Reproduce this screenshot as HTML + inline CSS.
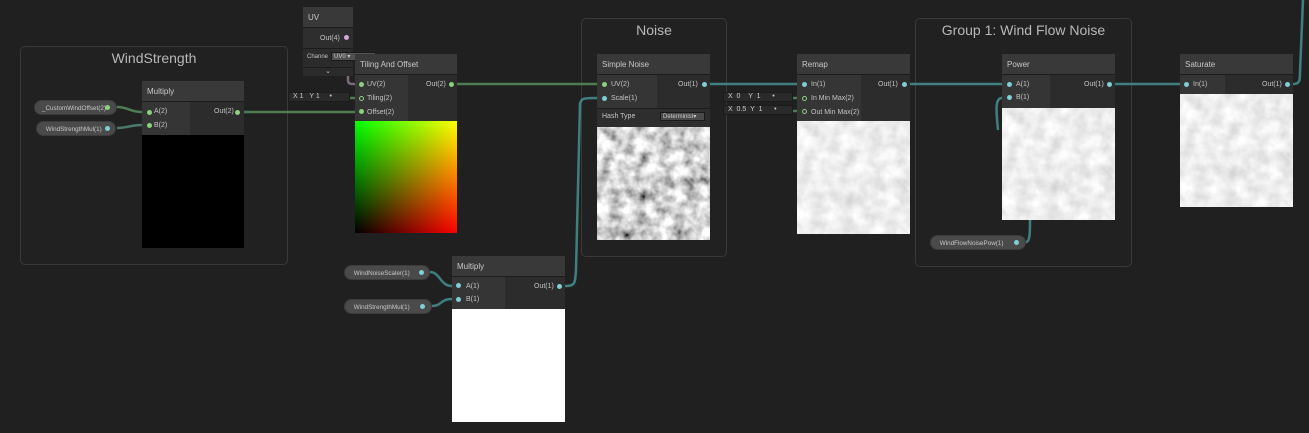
<!DOCTYPE html>
<html><head><style>
*{margin:0;padding:0;box-sizing:border-box}
body{width:1309px;height:433px;background:#202020;position:relative;overflow:hidden;font-family:"Liberation Sans",sans-serif;color:#c4c4c4}
.a{position:absolute}
.grp{position:absolute;border:1px solid #3a3a3a;border-radius:5px;background:#212121}
.gt{position:absolute;left:0;right:0;top:8px;text-align:center;font-size:14px;color:#b8b8b8}
.hd{position:absolute;background:#393939;font-size:8px;color:#c8c8c8;padding:6px 0 0 5px;border-bottom:1px solid #1c1c1c}
.in{position:absolute;background:#353535}
.out{position:absolute;background:#2c2c2c}
.t{position:absolute;font-size:7px;color:#c4c4c4;white-space:nowrap}
.dot{position:absolute;width:5px;height:5px;border-radius:50%}
.g{background:#8bd27d}.b{background:#7ecfd6}.pk{background:#d7a6d8}
.pill{position:absolute;background:#4a4a4a;border-radius:8px;font-size:6.3px;color:#c8c8c8;padding:4px 0 0 7px;border:1px solid #3c3c3c;white-space:nowrap;overflow:hidden}
.fld{position:absolute;background:#2a2a2a;font-size:7px;color:#ccc;border:1px solid #1b1b1b;white-space:nowrap}
</style></head><body>
<svg width="0" height="0" style="position:absolute">
<filter id="n1" x="0" y="0" width="100%" height="100%"><feTurbulence type="fractalNoise" baseFrequency="0.08" numOctaves="3" seed="3"/><feColorMatrix type="matrix" values="1.6 0 0 0 -0.15  1.6 0 0 0 -0.15  1.6 0 0 0 -0.15  0 0 0 0 1"/></filter>
<filter id="n2" x="0" y="0" width="100%" height="100%"><feTurbulence type="fractalNoise" baseFrequency="0.07" numOctaves="3" seed="3"/><feColorMatrix type="matrix" values="0.5 0 0 0 0.6  0.5 0 0 0 0.6  0.5 0 0 0 0.6  0 0 0 0 1"/></filter>
</svg>

<div class="grp" style="left:20px;top:46px;width:268px;height:219px"><div class="gt" style="top:3px">WindStrength</div></div>
<div class="grp" style="left:581px;top:18px;width:146px;height:239px"><div class="gt" style="top:3px">Noise</div></div>
<div class="grp" style="left:915px;top:18px;width:217px;height:249px"><div class="gt" style="top:3px">Group 1: Wind Flow Noise</div></div>

<svg class="a" style="left:0;top:0" width="1309" height="433">
<g fill="none" stroke-width="2.5">
<path d="M243 112 L355 112" stroke="#4f7c52"/>
<path d="M117 107 C128 107,130 112,142 112" stroke="#4f7c52"/>
<path d="M117 128 C128 128,130 125,142 125" stroke="#4a7a6e"/>
<path d="M342 38 C350 38,348 40,348 45 L348 80 C348 84,350 84,355 84" stroke="#7a6a7a"/>
<path d="M456 84 L597 84" stroke="#4f7c52"/>
<path d="M350 98 L355 98" stroke="#4f7c52"/>
<path d="M710 84 L797 84" stroke="#3f7f80"/>
<path d="M789 98 L797 98 M789 111 L797 111" stroke="#4f7c52"/>
<path d="M910 84 L1002 84 M1115 84 L1180 84" stroke="#3f7f80"/>
<path d="M1293 84 C1300 84,1300 80,1300 72 L1303 0" stroke="#3f7f80"/>
<path d="M565 286 C575 286,575 284,576 270 L580 104 C581 98,584 98,597 98" stroke="#3f7f80"/>
<path d="M430 272 C440 272,440 286,452 286" stroke="#3f7f80"/>
<path d="M432 306 C442 306,440 299,452 299" stroke="#3f7f80"/>
<path d="M1026 242 C1030 242,1030 232,1030 220 M1002 98 C995 98,996 110,998 130" stroke="#3f7f80"/>
</g></svg>

<div class="hd" style="left:303px;top:7px;width:50px;height:21px">UV</div>
<div class="out" style="left:303px;top:28px;width:50px;height:20px;background:#2e2e2e"></div>
<div class="t" style="left:320px;top:35px">Out(4)</div><div class="dot pk" style="left:344px;top:35px"></div>
<div class="in" style="left:303px;top:48px;width:50px;height:19px;background:#2b2b2b;border-top:1px solid #1c1c1c"></div>
<div class="t" style="left:307px;top:54px;font-size:6px">Channe</div>
<div class="fld" style="left:331px;top:52px;width:45px;height:9px;background:#515151;font-size:6px;padding-left:2px">UV0 ▾</div>
<div class="a" style="left:303px;top:67px;width:50px;height:9px;background:#2b2b2b;border-top:1px solid #1c1c1c;font-size:7px;text-align:center;line-height:8px">⌄</div>

<div class="hd" style="left:142px;top:81px;width:102px;height:21px">Multiply</div>
<div class="in" style="left:142px;top:102px;width:48px;height:33px"></div>
<div class="out" style="left:190px;top:102px;width:54px;height:33px"></div>
<div class="dot g" style="left:147px;top:110px"></div><div class="t" style="left:154px;top:108px">A(2)</div>
<div class="dot g" style="left:147px;top:123px"></div><div class="t" style="left:154px;top:122px">B(2)</div>
<div class="t" style="left:214px;top:108px">Out(2)</div><div class="dot g" style="left:235px;top:110px"></div>
<div class="a" style="left:142px;top:135px;width:102px;height:113px;background:#000"></div>
<div class="pill" style="left:34px;top:100px;width:83px;height:15px">_CustomWindOffset(2)</div><div class="dot g" style="left:105px;top:105px"></div>
<div class="pill" style="left:36px;top:121px;width:80px;height:15px">&nbsp;WindStrengthMul(1)</div><div class="dot b" style="left:105px;top:126px"></div>

<div class="hd" style="left:355px;top:54px;width:102px;height:21px">Tiling And Offset</div>
<div class="in" style="left:355px;top:75px;width:53px;height:46px"></div>
<div class="out" style="left:408px;top:75px;width:49px;height:46px"></div>
<div class="dot g" style="left:359px;top:82px"></div><div class="t" style="left:367px;top:81px">UV(2)</div>
<div class="dot" style="left:359px;top:96px;border:1px solid #8bd27d"></div><div class="t" style="left:367px;top:95px">Tiling(2)</div>
<div class="dot g" style="left:359px;top:109px"></div><div class="t" style="left:367px;top:109px">Offset(2)</div>
<div class="t" style="left:426px;top:81px">Out(2)</div><div class="dot g" style="left:449px;top:82px"></div>
<div class="fld" style="left:288px;top:92px;width:62px;height:10px;padding-left:4px">X 1 &nbsp;&nbsp;Y 1 &nbsp;&nbsp;&nbsp;&nbsp;•</div>
<div class="a" style="left:355px;top:121px;width:102px;height:112px;background:linear-gradient(to right,#000,#f00)"></div>
<div class="a" style="left:355px;top:121px;width:102px;height:112px;background:linear-gradient(to top,#000,#0f0);mix-blend-mode:screen"></div>

<div class="hd" style="left:597px;top:54px;width:113px;height:21px">Simple Noise</div>
<div class="in" style="left:597px;top:75px;width:60px;height:33px"></div>
<div class="out" style="left:657px;top:75px;width:53px;height:33px"></div>
<div class="dot g" style="left:602px;top:82px"></div><div class="t" style="left:611px;top:81px">UV(2)</div>
<div class="dot b" style="left:602px;top:96px"></div><div class="t" style="left:611px;top:95px">Scale(1)</div>
<div class="t" style="left:678px;top:81px">Out(1)</div><div class="dot b" style="left:702px;top:82px"></div>
<div class="a" style="left:597px;top:108px;width:113px;height:19px;background:#2e2e2e;border-top:1px solid #1c1c1c"></div>
<div class="t" style="left:602px;top:113px">Hash Type</div>
<div class="fld" style="left:660px;top:112px;width:45px;height:9px;background:#4a4a4a;font-size:6px;padding-left:2px">Determinist▾</div>
<svg class="a" style="left:597px;top:127px" width="113" height="113"><rect width="113" height="113" filter="url(#n1)"/></svg>

<div class="hd" style="left:797px;top:54px;width:113px;height:21px">Remap</div>
<div class="in" style="left:797px;top:75px;width:64px;height:46px"></div>
<div class="out" style="left:861px;top:75px;width:49px;height:46px"></div>
<div class="dot b" style="left:802px;top:82px"></div><div class="t" style="left:811px;top:81px">In(1)</div>
<div class="dot" style="left:802px;top:96px;border:1px solid #8bd27d"></div><div class="t" style="left:811px;top:95px">In Min Max(2)</div>
<div class="dot" style="left:802px;top:109px;border:1px solid #8bd27d"></div><div class="t" style="left:811px;top:109px">Out Min Max(2)</div>
<div class="t" style="left:878px;top:81px">Out(1)</div><div class="dot b" style="left:902px;top:82px"></div>
<div class="fld" style="left:723px;top:92px;width:70px;height:10px;padding-left:4px">X &nbsp;0 &nbsp;&nbsp;&nbsp;Y &nbsp;1 &nbsp;&nbsp;&nbsp;&nbsp;&nbsp;•</div>
<div class="fld" style="left:723px;top:105px;width:70px;height:10px;padding-left:4px">X &nbsp;0.5 &nbsp;Y &nbsp;1 &nbsp;&nbsp;&nbsp;&nbsp;&nbsp;•</div>
<svg class="a" style="left:797px;top:121px" width="113" height="113"><rect width="113" height="113" filter="url(#n2)"/></svg>

<div class="hd" style="left:1002px;top:54px;width:113px;height:21px">Power</div>
<div class="in" style="left:1002px;top:75px;width:48px;height:33px"></div>
<div class="out" style="left:1050px;top:75px;width:65px;height:33px"></div>
<div class="dot b" style="left:1007px;top:82px"></div><div class="t" style="left:1016px;top:81px">A(1)</div>
<div class="dot b" style="left:1007px;top:95px"></div><div class="t" style="left:1016px;top:94px">B(1)</div>
<div class="t" style="left:1084px;top:81px">Out(1)</div><div class="dot b" style="left:1107px;top:82px"></div>
<svg class="a" style="left:1002px;top:108px" width="113" height="112"><rect width="113" height="112" filter="url(#n2)"/></svg>
<div class="pill" style="left:930px;top:235px;width:96px;height:15px">&nbsp;WindFlowNoisePow(1)</div><div class="dot b" style="left:1014px;top:240px"></div>

<div class="hd" style="left:1180px;top:54px;width:113px;height:21px">Saturate</div>
<div class="in" style="left:1180px;top:75px;width:45px;height:19px"></div>
<div class="out" style="left:1225px;top:75px;width:68px;height:19px"></div>
<div class="dot b" style="left:1184px;top:82px"></div><div class="t" style="left:1193px;top:81px">In(1)</div>
<div class="t" style="left:1262px;top:81px">Out(1)</div><div class="dot b" style="left:1285px;top:82px"></div>
<svg class="a" style="left:1180px;top:94px" width="113" height="113"><rect width="113" height="113" filter="url(#n2)"/></svg>

<div class="hd" style="left:452px;top:256px;width:113px;height:21px">Multiply</div>
<div class="in" style="left:452px;top:277px;width:53px;height:32px"></div>
<div class="out" style="left:505px;top:277px;width:60px;height:32px"></div>
<div class="dot b" style="left:456px;top:283px"></div><div class="t" style="left:466px;top:283px">A(1)</div>
<div class="dot b" style="left:456px;top:297px"></div><div class="t" style="left:466px;top:296px">B(1)</div>
<div class="t" style="left:534px;top:283px">Out(1)</div><div class="dot b" style="left:557px;top:284px"></div>
<div class="a" style="left:452px;top:309px;width:113px;height:113px;background:#fff"></div>
<div class="pill" style="left:344px;top:265px;width:86px;height:15px">&nbsp;WindNoiseScaler(1)</div><div class="dot b" style="left:419px;top:270px"></div>
<div class="pill" style="left:344px;top:299px;width:88px;height:15px">&nbsp;WindStrengthMul(1)</div><div class="dot b" style="left:420px;top:304px"></div>
</body></html>
